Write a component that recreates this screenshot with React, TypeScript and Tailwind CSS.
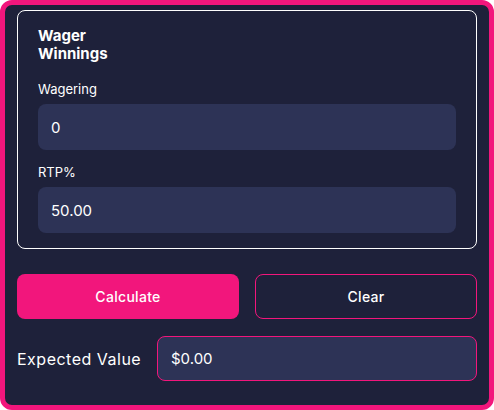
import { useState } from 'react'

// ── Field ────────────────────────────────────────────────────────────────────
function Field({ label, value, onChange }: {
  label: string; value: string; onChange: (v: string) => void
}) {
  return (
    <div>
      <p className="text-[13px] leading-4 text-white mb-[7px]">{label}</p>
      <input
        value={value}
        onChange={e => onChange(e.target.value)}
        className="w-full h-[46px] rounded-lg bg-[#2d3356] px-[13px] text-[15px] text-white outline-none"
      />
    </div>
  )
}

export default function App() {
  const [wager, setWager] = useState('0')
  const [rtp, setRtp] = useState('50.00')
  const [ev, setEv] = useState('$0.00')

  const calc = () => {
    const w = parseFloat(wager) || 0
    const r = parseFloat(rtp) || 0
    setEv(`$${(w * r / 100 - w).toFixed(2)}`)
  }
  const clear = () => { setWager('0'); setRtp('50.00'); setEv('$0.00') }

  return (
    <div className="w-[494px] h-[410px] rounded-[12px] border-[5px] border-[#f2167c] bg-[#1e213a] px-3 pt-[5px] text-white"
      style={{ fontFamily: 'Inter, "Noto Sans", sans-serif' }}>
      <div className="rounded-lg border border-white px-5 pt-4 pb-[15px]">
        <h2 className="text-[15px] leading-[18px] font-bold mb-[18px]">Wager<br />Winnings</h2>
        <div className="flex flex-col gap-[14px]">
          <Field label="Wagering" value={wager} onChange={setWager} />
          <Field label="RTP%" value={rtp} onChange={setRtp} />
        </div>
      </div>

      <div className="grid grid-cols-2 gap-4 mt-[25px]">
        <button onClick={calc}
          className="h-[45px] rounded-lg bg-[#f2167c] text-[14px] font-medium tracking-[0.3px] text-white">
          Calculate
        </button>
        <button onClick={clear}
          className="h-[45px] rounded-lg border border-[#f2167c] text-[14px] font-medium tracking-[0.3px] text-white">
          Clear
        </button>
      </div>

      <div className="flex items-center gap-4 mt-[17px]">
        <span className="w-[124px] text-[16px] tracking-[0.5px] whitespace-nowrap text-white">Expected Value</span>
        <input
          value={ev}
          readOnly
          className="flex-1 min-w-0 h-[45px] rounded-lg border border-[#f2167c] bg-[#2d3356] px-[13px] text-[15px] text-white outline-none"
        />
      </div>
    </div>
  )
}
